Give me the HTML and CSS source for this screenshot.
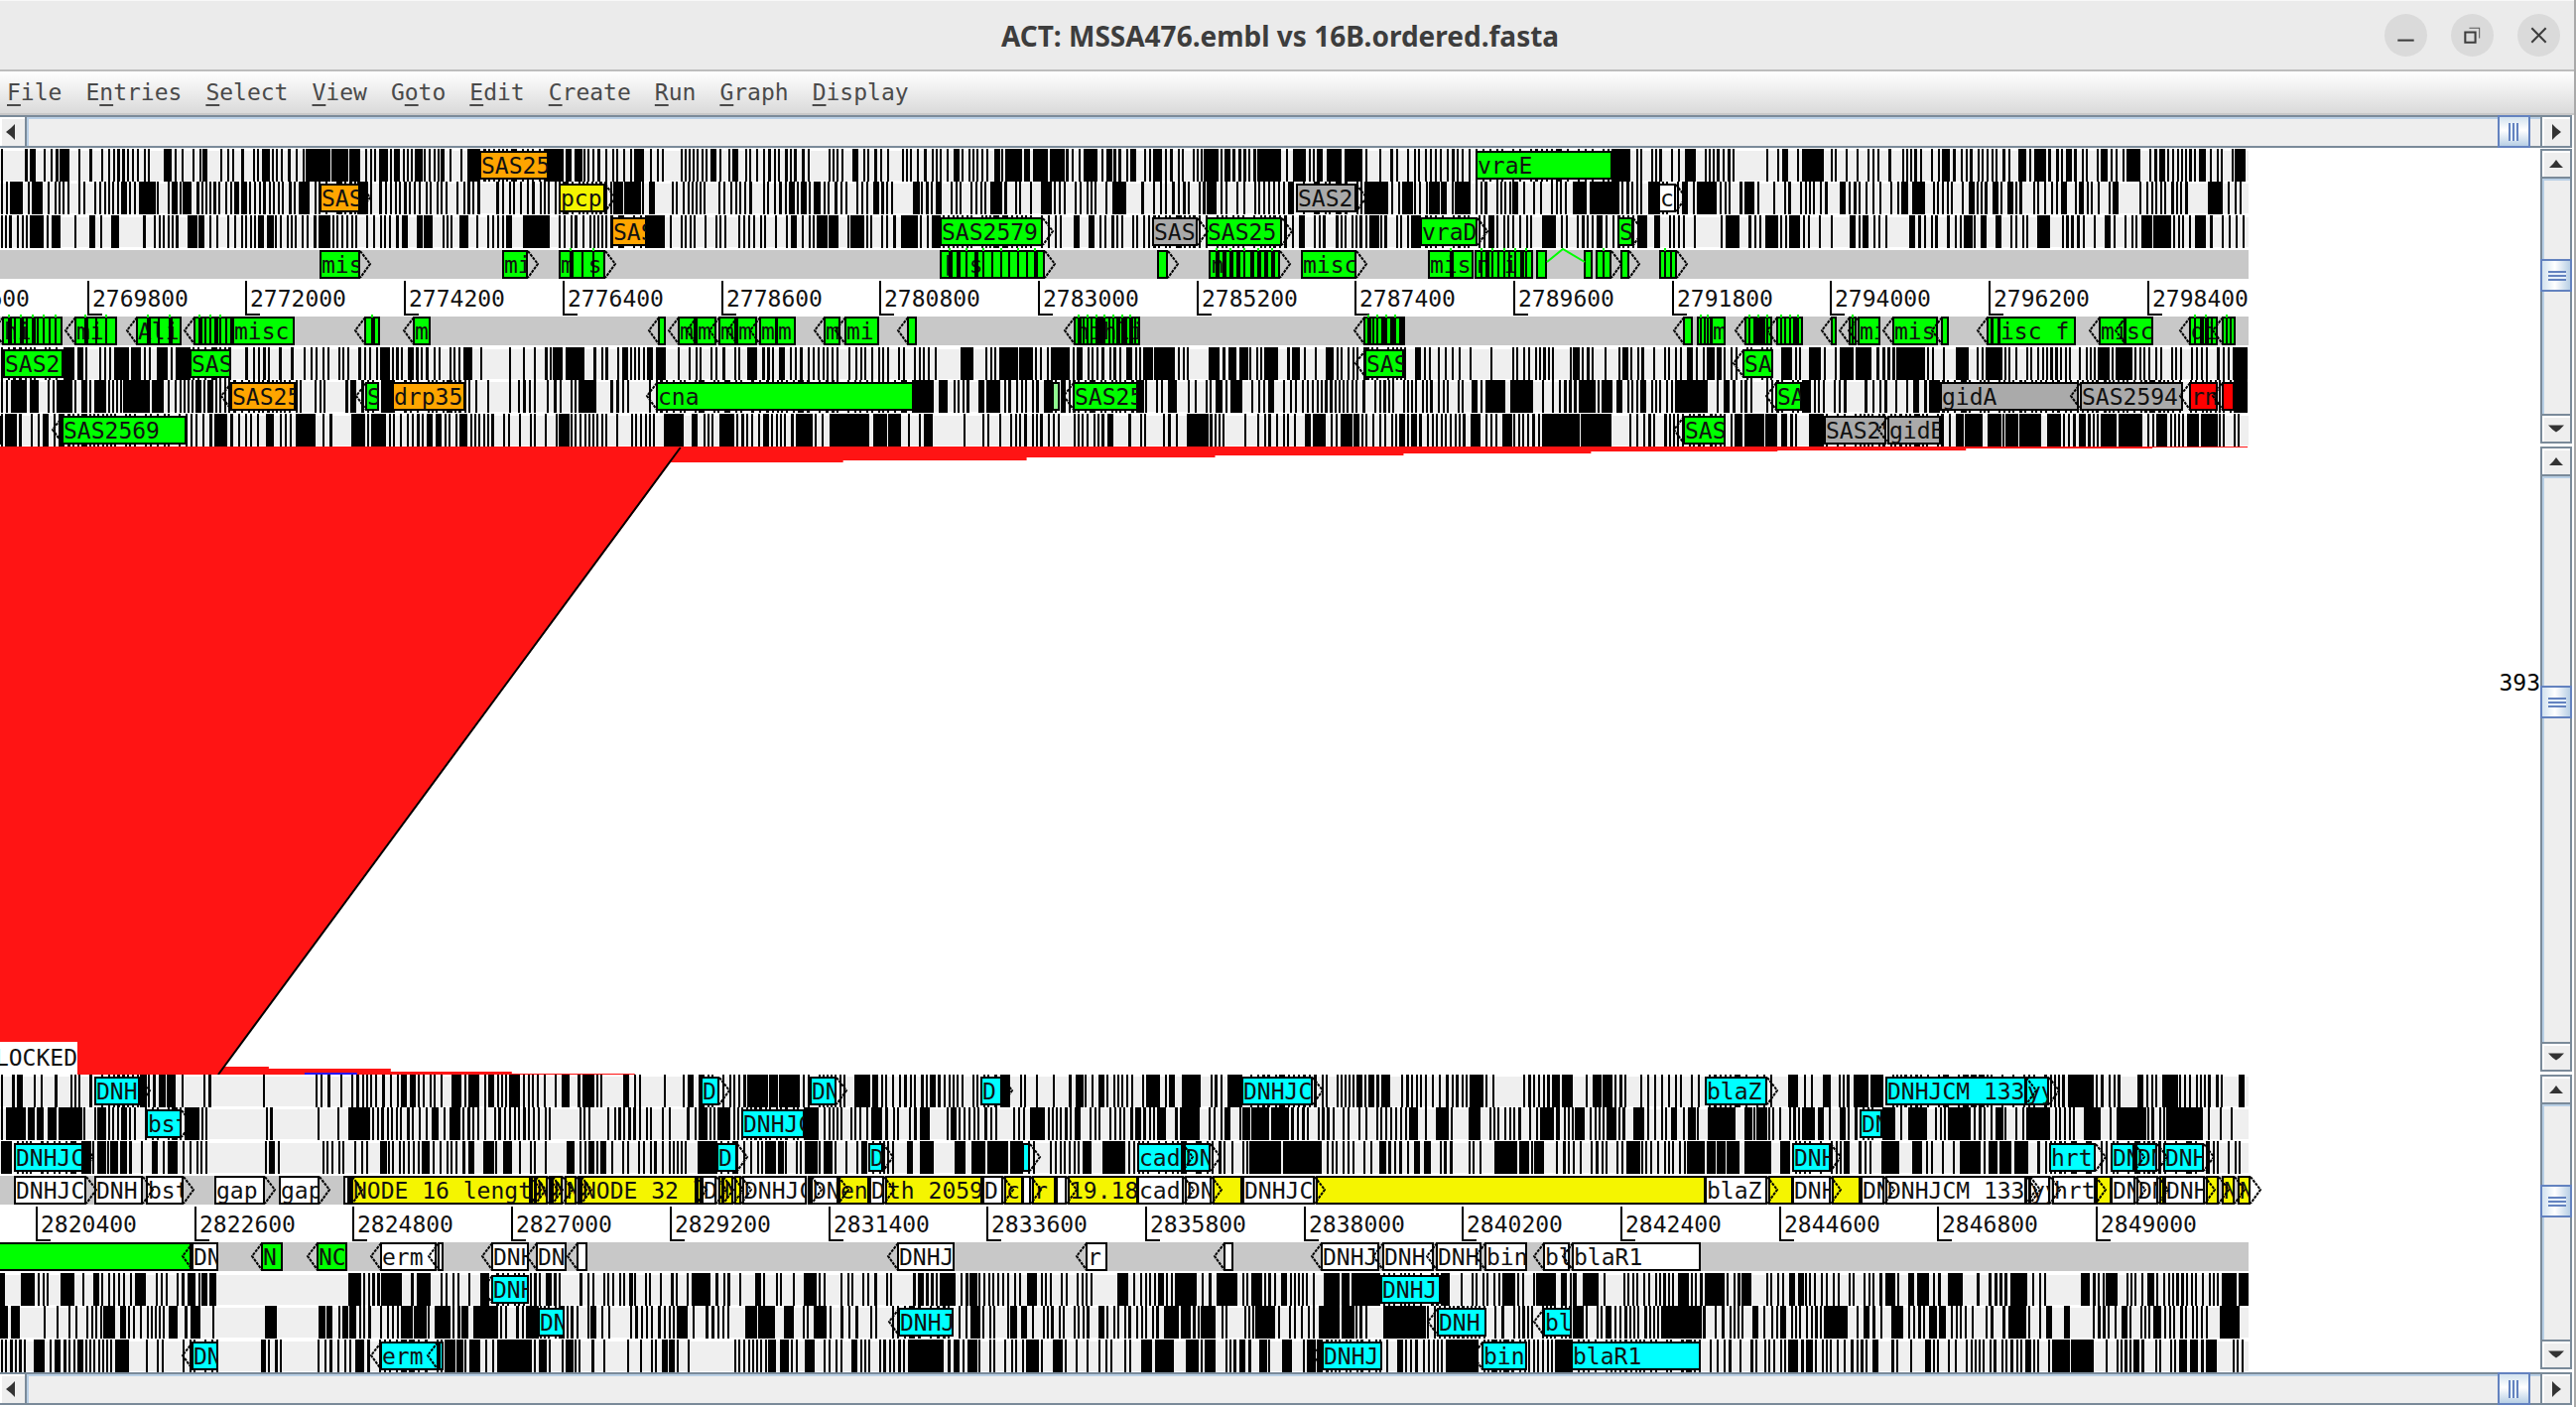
FILE: index.html
```
<!DOCTYPE html>
<html lang="en">
<head>
<meta charset="utf-8">
<title>ACT: MSSA476.embl vs 16B.ordered.fasta</title>
<link rel="stylesheet" href="styles.css">
</head>
<body>
<div class="window">
  <header class="titlebar">
    <h1 class="title">ACT: MSSA476.embl vs 16B.ordered.fasta</h1>
    <div class="window-buttons">
      <button class="round" aria-label="Minimize"><svg viewBox="0 0 42 42"><path d="M13 26h16" stroke-width="2"/></svg></button>
      <button class="round" aria-label="Restore"><svg viewBox="0 0 42 42"><path d="M14 18h10v10H14z" stroke-width="2"/><path d="M18 14h10v10" stroke-width="1" opacity=".8"/></svg></button>
      <button class="round" aria-label="Close"><svg viewBox="0 0 42 42"><path d="M14 14l14 14M28 14L14 28" stroke-width="2"/></svg></button>
    </div>
  </header>
  <nav class="menubar" aria-label="Main menu">
    <button><u>F</u>ile</button>
    <button>E<u>n</u>tries</button>
    <button><u>S</u>elect</button>
    <button><u>V</u>iew</button>
    <button>G<u>o</u>to</button>
    <button><u>E</u>dit</button>
    <button><u>C</u>reate</button>
    <button><u>R</u>un</button>
    <button><u>G</u>raph</button>
    <button><u>D</u>isplay</button>
  </nav>
  <div class="hscroll">
    <button class="arrow left" aria-label="Scroll left"><svg viewBox="0 0 9 16"><path d="M9 0v16L5 12 0 8l5-4z"/></svg></button>
    <div class="trough"><span class="before"></span><span class="thumb"></span></div>
    <button class="arrow right" aria-label="Scroll right"><svg viewBox="0 0 9 16"><path d="M0 0v16l4-4 5-4-5-4z"/></svg></button>
  </div>
  <main class="panels">
    <section class="panel sequence">
      <svg class="tracks" id="subject" role="img" aria-label="MSSA476.embl"></svg>
      <div class="vscroll">
        <button class="arrow" aria-label="Scroll up"><svg viewBox="0 0 14 8"><path d="M0 8h14L10 4 7 0 4 4z"/></svg></button>
        <div class="trough"><span class="before top"></span><span class="thumb"></span></div>
        <button class="arrow" aria-label="Scroll down"><svg viewBox="0 0 18 8"><path d="M0 0h18L13 5 9 8 5 5z"/></svg></button>
      </div>
    </section>
    <section class="panel comparison">
      <div class="matches">
        <svg class="match-map" viewBox="0 0 2561 632" preserveAspectRatio="none" role="img" aria-label="Matches">
          <path fill="#ff1414" d="M0 0H2266V1H2170V2H1982V4H1792V5H1604V7H1415V9H1225V11H1035V14H850V16H676L220 632H0z"/>
          <path fill="#ff1414" d="M224 624H271V626H394V629H516V631H640V632H220z"/>
          <path fill="#2814ff" d="M307 630h53v2h-53z"/>
          <path fill="none" stroke="#000" stroke-width="2" d="M686 1L220 632"/>
        </svg>
        <span class="lock">LOCKED</span>
        <span class="score">393</span>
      </div>
      <div class="vscroll">
        <button class="arrow" aria-label="Scroll up"><svg viewBox="0 0 14 8"><path d="M0 8h14L10 4 7 0 4 4z"/></svg></button>
        <div class="trough"><span class="before middle"></span><span class="thumb"></span></div>
        <button class="arrow" aria-label="Scroll down"><svg viewBox="0 0 18 8"><path d="M0 0h18L13 5 9 8 5 5z"/></svg></button>
      </div>
    </section>
    <section class="panel sequence">
      <svg class="tracks" id="query" role="img" aria-label="16B.ordered.fasta"></svg>
      <div class="vscroll">
        <button class="arrow" aria-label="Scroll up"><svg viewBox="0 0 14 8"><path d="M0 8h14L10 4 7 0 4 4z"/></svg></button>
        <div class="trough"><span class="before top"></span><span class="thumb"></span></div>
        <button class="arrow" aria-label="Scroll down"><svg viewBox="0 0 18 8"><path d="M0 0h18L13 5 9 8 5 5z"/></svg></button>
      </div>
    </section>
  </main>
  <div class="hscroll">
    <button class="arrow left" aria-label="Scroll left"><svg viewBox="0 0 9 16"><path d="M9 0v16L5 12 0 8l5-4z"/></svg></button>
    <div class="trough"><span class="before"></span><span class="thumb"></span></div>
    <button class="arrow right" aria-label="Scroll right"><svg viewBox="0 0 9 16"><path d="M0 0v16l4-4 5-4-5-4z"/></svg></button>
  </div>
</div>
<script src="tracks.js"></script>
</body>
</html>
```
FILE: styles.css
```
* { box-sizing: border-box; }
body {
  margin: 0;
  background: #a9a9a9;
  font-family: "DejaVu Sans Mono", monospace;
  font-size: 23px;
}
button { border: 0; padding: 0; background: none; font: inherit; color: inherit; }
.window {
  display: flex;
  flex-direction: column;
  min-height: 100vh;
  margin-right: 2px;
  padding-bottom: 2px;
  background: #fff;
}
.titlebar {
  display: grid;
  grid-template-columns: 1fr auto 1fr;
  align-items: center;
  height: 72px;
  padding-right: 14px;
  background: #ebebeb;
  border-top: 1px solid #f8f8f8;
  border-bottom: 2px solid #bdbdbd;
}
.title {
  grid-column: 2;
  margin: 0;
  font: bold 28px/36px "Noto Sans", sans-serif;
  color: #3d3d3d;
}
.window-buttons { display: flex; justify-content: flex-end; gap: 24px; }
.round { width: 43px; height: 43px; border-radius: 50%; background: #dadada; }
.round svg { display: block; width: 43px; height: 43px; fill: none; stroke: #3d3d3d; }
.menubar {
  display: flex;
  gap: 24px;
  height: 44px;
  padding: 0 7px;
  background: linear-gradient(#fff, #dadada);
  border-bottom: 2px solid #c8c8c8;
  color: #4a4a4a;
}
.menubar u { text-underline-offset: 4px; text-decoration-thickness: 2px; }
.hscroll {
  display: flex;
  height: 33px;
  border: solid #7a8a99;
  border-width: 2px 2px 2px 0;
  background: #eee;
  box-shadow: inset 0 2px #b8cfe5;
  margin-right: 2px;
}
.arrow { display: flex; align-items: center; justify-content: center; flex: none; background: #eee; }
.arrow svg { fill: #333; }
.hscroll .arrow { width: 30px; border-left: 2px solid #7a8a99; box-shadow: inset 2px 2px #fff; }
.hscroll .arrow.left { width: 27px; padding-right: 5px; border-left: 0; border-right: 2px solid #7a8a99; }
.hscroll .arrow svg { width: 9px; height: 16px; }
.trough { display: flex; flex: 1; }
.hscroll .trough { box-shadow: inset 2px 2px #b8cfe5; }
.hscroll .before { flex: 1; }
.thumb { flex: none; border: 2px solid #6382bf; }
.hscroll .thumb {
  width: 33px;
  margin: -2px 10px -2px 0;
  background:
    repeating-linear-gradient(90deg, #6382bf 0 2px, #e6f0fa 2px 4px) 9px 6px / 10px 18px no-repeat,
    linear-gradient(#d2e2ef, #fff 45%, #b8cfe5);
}
.panels { display: flex; flex-direction: column; flex: 1; padding-top: 1px; }
.panel { display: flex; background: #fff; }
.sequence { height: 300px; }
.comparison { flex: 1; min-height: 200px; }
.tracks { flex: 1; min-width: 0; height: 300px; }
.tracks text { font: 23px "DejaVu Sans Mono", monospace; fill: #111; }
.matches { position: relative; flex: 1; min-width: 0; }
.match-map { position: absolute; inset: 0; width: 100%; height: 100%; }
.lock {
  position: absolute;
  left: 0;
  bottom: 0;
  width: 78px;
  height: 33px;
  direction: rtl;
  overflow: hidden;
  background: #fff;
  line-height: 33px;
  color: #111;
}
.score { position: absolute; right: 0; top: 35%; line-height: 32px; }
.vscroll {
  display: flex;
  flex-direction: column;
  flex: none;
  width: 32px;
  margin: 0 2px 3px 0;
  border: 2px solid #7a8a99;
  background: #eee;
}
.vscroll .arrow { height: 28px; border: 0 solid #7a8a99; box-shadow: inset 2px 2px #fff; }
.vscroll .arrow:first-child { border-bottom-width: 2px; }
.vscroll .arrow:last-child { border-top-width: 2px; }
.vscroll .arrow svg { width: 16px; height: 8px; }
.vscroll .trough { flex-direction: column; box-shadow: inset 2px 2px #b8cfe5; }
.vscroll .before.top { flex: 0 0 34%; }
.vscroll .before.middle { flex: 0 0 37%; }
.vscroll .thumb {
  height: 33px;
  margin: 0 -2px;
  background:
    repeating-linear-gradient(#6382bf 0 2px, #e6f0fa 2px 4px) 6px 10px / 18px 10px no-repeat,
    linear-gradient(90deg, #d2e2ef, #fff 45%, #b8cfe5);
}
```
FILE: tracks.js
```
const NS = 'http://www.w3.org/2000/svg';
const WIDTH = 2266;
const ROW_TOP = [0, 33, 67, 100, 133, 167, 200, 233, 267];
const COLORS = { o: '#ffa500', g: '#00ff00', y: '#f5f500', a: '#aaaaaa', w: '#ffffff', c: '#00ffff', r: '#ff0000', p: '#90f890' };

// Stop codon density per frame row: [row, solid runs, open runs]
const subjectStops = [
  [0, '60-70 166-171 204-208 265-270 308-321 323-333 334-350 352-360 386-391 420-426 444-448 474-484 553-567 571-576 579-587 640-649 861-864 1002-1008 1013-1030 1041-1056 1061-1073 1093-1106 1115-1121 1162-1170 1213-1223 1267-1291 1306-1314 1337-1352 1355-1371 1624-1643 1698-1708 1820-1832 1957-1964 2034-2040 2050-2061 2118-2123 2143-2154 2218-2223 2252-2260', '7-25 36-44 71-79 153-165 210-222 235-243 675-686 730-734 742-751 818-835 897-909 1147-1153 1377-1390 1394-1401 1752-1780 1835-1845 1909-1917'],
  [1, '14-22 35-43 140-157 184-191 236-241 301-311 360-371 618-626 629-646 821-826 922-927 998-1008 1052-1058 1122-1133 1128-1135 1216-1226 1377-1398 1415-1424 1440-1451 1466-1480 1524-1530 1585-1594 1602-1631 1663-1672 1716-1730 1758-1768 1916-1923 1928-1937 2096-2100 2225-2240', '374-382 450-460 485-500 656-677 713-724 763-769 902-920 1013-1023 1135-1150 1537-1545 1654-1661 1776-1787 1843-1854 1938-1948 2040-2049 2080-2091 2130-2156 2204-2225'],
  [2, '30-41 52-60 112-120 191-199 270-276 321-333 427-436 463-472 528-552 656-669 824-834 836-845 857-866 910-925 939-948 1380-1390 1422-1432 1555-1568 1652-1660 1741-1749 1779-1792 1804-1814 1980-1988 2055-2065 2158-2169 2171-2186 2212-2223', '61-75 78-90 121-144 147-155 440-446 517-527 679-686 734-744 1069-1082 1336-1346 1401-1407 1545-1554 1661-1667 1716-1734 1835-1845 1848-1864 1902-1924 2065-2078 2261-2266'],
  [6, '64-75 117-130 132-142 158-166 177-192 384-393 467-476 557-567 573-584 661-671 753-761 970-981 1008-1025 1027-1040 1059-1078 1154-1162 1163-1181 1218-1229 1238-1246 1250-1258 1276-1286 1304-1310 1336-1344 1585-1592 1720-1728 1730-1735 1795-1806 1823-1833 1854-1867 1872-1886 1911-1940 1973-1984 2007-2016 2114-2126 2133-2148 2250-2265', '88-100 235-247 298-306 490-513 514-527 584-598 672-683 847-855 945-968 983-993 1198-1218 1441-1449 1483-1502 1506-1524 1571-1582 1605-1617 1621-1631 1789-1795 1965-1971 1986-1992 2087-2095'],
  [7, '13-27 32-38 57-73 95-107 124-151 155-165 384-396 584-600 921-939 948-955 994-1008 1052-1061 1069-1074 1146-1153 1177-1186 1225-1231 1242-1250 1499-1516 1522-1545 1593-1606 1616-1625 1690-1719 1817-1823 1944-1953 2253-2265', '306-317 331-348 484-491 494-513 515-522 539-551 567-575 600-615 633-654 1187-1197 1474-1483 1556-1564 1768-1780 1840-1848 1867-1879 1900-1910'],
  [8, '6-16 216-228 268-276 298-314 356-367 377-387 463-471 563-574 671-689 725-738 802-818 836-874 880-893 895-908 931-940 1198-1218 1323-1334 1352-1363 1482-1491 1514-1524 1554-1591 1593-1624 1749-1756 1758-1778 1780-1791 1825-1837 1971-1978 1980-1996 2003-2017 2021-2034 2040-2057 2063-2076 2095-2101 2118-2133 2135-2158 2174-2183 2204-2216 2218-2235', '23-31 314-325 344-354 627-636 703-709 940-971 973-990 1000-1007 1069-1082 1120-1137 1156-1172 1237-1254 1256-1267 1625-1642 1810-1823'],
];
const queryStops = [
  [0, '141-148 160-166 168-177 457-465 474-480 515-522 567-574 589-597 753-774 776-783 785-806 862-877 938-943 1010-1018 1084-1092 1155-1166 1191-1210 1237-1252 1392-1401 1487-1495 1564-1572 1574-1583 1606-1614 1617-1625 1802-1812 1839-1845 1868-1883 1885-1898 2086-2110 2155-2160 2179-2195 2258-2261', '21-34 46-55 63-71 188-205 215-265 272-318 333-343 347-354 607-628 648-669 671-688 696-704 853-861 973-980 1021-1028 1036-1044 1049-1061 1067-1077 1215-1220 1401-1412 1514-1535 1585-1598 1642-1653 1695-1701 1791-1802 1827-1837 1845-1853 2137-2154 2241-2256 2261-2266'],
  [1, '8-15 16-26 29-34 37-44 48-57 60-83 98-107 189-200 353-362 367-373 435-441 453-461 705-713 726-736 811-823 880-887 929-933 1044-1052 1166-1174 1191-1209 1234-1239 1252-1260 1265-1279 1281-1299 1420-1429 1453-1459 1482-1490 1552-1566 1568-1572 1587-1596 1621-1629 1646-1656 1684-1690 1701-1709 1722-1747 1758-1766 1770-1781 1816-1827 1898-1908 1924-1942 1965-1982 2011-2019 2042-2066 2101-2117 2134-2163 2183-2205 2210-2219', '210-268 274-320 326-340 342-351 490-498 577-584 560-583 598-612 661-667 677-692 851-857 908-916 935-954 1012-1021 1239-1246 1346-1353 1464-1480 1533-1541 1797-1803 1846-1854 1919-1923 2118-2126 2128-2133 2229-2237 2239-2248 2254-2264'],
  [2, '2-12 84-92 100-107 111-119 121-126 169-179 383-390 427-433 492-498 507-514 571-579 705-723 772-780 784-790 812-824 832-839 915-920 928-941 966-973 979-993 995-1016 1020-1031 1091-1100 1112-1129 1120-1130 1259-1291 1293-1332 1392-1397 1435-1441 1508-1529 1532-1541 1546-1556 1642-1653 1700-1718 1721-1729 1731-1739 1741-1753 1758-1783 1795-1804 1898-1914 1929-1937 1981-1996 2005-2011 2018-2026 2032-2042 2223-2227', '180-184 209-267 274-279 283-325 346-357 371-383 500-506 515-523 560-571 579-584 617-627 692-703 905-914 920-927 949-962 973-979 1052-1058 1101-1111 1236-1241 1382-1390 1441-1451 1466-1480 1495-1506 1558-1568 1752-1758 1784-1788 1887-1896 1915-1927 2261-2266'],
  [6, '0-5 23-34 63-75 138-147 189-197 203-209 212-218 352-358 384-405 420-434 486-493 634-638 700-712 813-823 925-931 947-962 977-985 1036-1045 1128-1136 1167-1173 1186-1195 1197-1206 1227-1242 1263-1272 1334-1350 1352-1360 1362-1391 1452-1459 1514-1523 1548-1568 1585-1589 1596-1610 1691-1700 1718-1728 1730-1737 1755-1764 1812-1818 1902-1910 1934-1944 1965-1978 2026-2038 2099-2106 2122-2132 2164-2171 2241-2253 2256-2266', '6-21 48-61 147-157 219-351 434-444 475-484 564-584 747-761 772-782 791-799 802-810 834-847 908-920 963-968 1029-1035 1105-1126 1461-1472 1590-1595 1627-1636 1765-1780 1955-1963 1980-1992 1996-2003 2066-2097 2214-2219'],
  [7, '0-8 11-20 104-115 170-179 193-202 268-279 323-328 352-358 404-414 417-430 440-452 465-472 477-502 530-543 595-601 682-690 751-761 764-779 790-799 824-832 980-988 1018-1025 1177-1188 1190-1198 1210-1219 1265-1283 1329-1350 1352-1365 1396-1415 1417-1437 1585-1594 1686-1713 1680-1687 1699-1715 1841-1862 1906-1918 1944-1952 1956-1961 2024-2042 2080-2086 2170-2177 2239-2257', '20-44 46-57 59-69 203-214 217-267 279-321 334-341 375-383 583-592 617-635 702-711 738-751 801-809 866-877 885-899 1003-1015 1221-1231 1242-1254 1378-1394 1499-1506 1718-1728 1778-1785 1898-1906 1992-2001 2066-2080 2088-2109 2226-2237'],
  [8, '34-40 116-130 264-268 358-367 450-459 461-467 474-482 502-528 530-535 543-551 572-578 667-672 674-680 774-782 786-794 813-820 916-951 977-985 1036-1046 1062-1071 1152-1161 1166-1182 1195-1208 1216-1225 1269-1277 1294-1301 1317-1325 1327-1333 1459-1488 1568-1584 1802-1812 1820-1827 1941-1946 2069-2084 2087-2108 2196-2204 2208-2214 2225-2233', '26-34 130-147 165-184 220-263 283-320 560-566 585-596 609-632 634-645 697-740 805-811 820-826 1006-1012 1052-1061 1096-1107 1122-1133 1145-1150 1183-1195 1229-1235 1252-1258 1281-1292 1306-1313 1743-1753 1755-1764 1772-1778 1896-1906 1915-1925 1927-1940 2109-2122 2164-2172 2235-2250'],
];

// Features: row start end colour direction label ("|n" draws n exon boundaries)
const subjectFeatures = `
0 484 553 o - SAS25
0 1488 1625 g - vraE
1 323 363 o > SAS
1 564 610 y > pcp
1 1307 1367 a > SAS2
1 1672 1689 w > c
2 617 652 o > SAS
2 948 1051 g > SAS2579
2 1162 1207 a > SAS
2 1216 1292 g > SAS25
2 1432 1489 g > vraD
2 1631 1646 g > S
3 323 363 g > mis
3 507 532 g > mi
3 564 610 g > m s|3
3 948 1053 g > [ s|11
3 1167 1177 g >
3 1219 1290 g > n|9
3 1312 1367 g > misc
3 1440 1485 g - mis|1
3 1487 1545 g - n i|9
3 1549 1559 g -
3 1597 1605 g -
3 1609 1624 g > |1
3 1634 1642 g >
3 1673 1690 g > |2
5 3 63 g < hi|9
5 76 118 g < mi|3
5 138 183 g < Ali|3
5 196 234 g < |6
5 235 297 g - misc
5 368 383 g < |1
5 417 434 g < m
5 664 671 g <
5 684 701 g < m
5 702 722 g < m
5 725 742 g < m
5 743 763 g < m
5 766 783 g < m
5 783 802 g - m
5 831 847 g < m
5 852 886 g < mi
5 915 924 g <
5 1083 1149 g < nihli|14
5 1375 1416 g < |8
5 1697 1706 g <
5 1711 1725 g - |3
5 1725 1739 g - m
5 1759 1786 g < |5
5 1791 1817 g < |5
5 1846 1851 g <
5 1864 1871 g < |1
5 1873 1895 g < mi
5 1908 1953 g < mis
5 1957 1964 g <
5 2003 2008 g <
5 2008 2015 g -
5 2015 2092 g - isc f
5 2116 2142 g < mi
5 2142 2170 g < sc
5 2207 2235 g < di|4
5 2240 2253 g < |2
6 4 64 g - SAS2
6 192 233 g - SAS
6 1376 1415 g < SAS
6 1757 1787 g < SA
7 233 298 o < SAS25
7 369 382 g < S
7 396 469 o - drp35
7 662 921 g < cna
7 1061 1068 p -
7 1082 1147 g < SAS25
7 1790 1816 g < SA
7 1956 2095 a < gidA
7 2097 2200 a < SAS2594
7 2207 2235 r < rn
7 2240 2252 r <
8 0 2 p -
8 63 188 g < SAS2569
8 1697 1739 g < SAS
8 1839 1901 a < SAS25
8 1903 1956 a < gidB`;
const queryFeatures = `
0 96 141 c > DNH
0 707 725 c > D
0 817 843 c > DN
0 989 1010 c > D
0 1252 1323 c > DNHJC
0 1719 1781 c > blaZ
0 1901 2042 c > DNHJCM_133
0 2042 2065 c > yy
1 148 183 c > bst
1 748 811 c - DNHJC
1 1875 1897 c > DN
2 15 84 c > DNHJC
2 723 743 c > D
2 876 890 c > D
2 1031 1038 c >
2 1147 1192 c > cad
2 1194 1220 c > DN
2 1807 1845 c > DNH
2 2066 2112 c > hrt
2 2128 2151 c > DN
2 2153 2174 c > DN
2 2181 2221 c > DNH
3 15 87 w > DNHJC
3 96 144 w > DNH
3 148 185 w > bst
3 217 267 w > gap
3 282 322 w > gap
3 347 352 w -
3 352 355 y >
3 355 535 y > NODE_16_lengt
3 536 540 y >
3 540 552 y > N
3 554 557 y >
3 557 567 y > N
3 570 581 y > N
3 583 586 y >
3 586 702 y > NODE_32_l
3 703 707 y -
3 708 722 w > D
3 725 729 y >
3 729 739 y > N
3 741 747 y >
3 749 813 w - DNHJC
3 815 818 y >
3 818 845 w > DN
3 846 876 y - en
3 877 891 w > D
3 893 990 y - th_2059
3 991 1011 w > D
3 1013 1031 y - c
3 1031 1039 w >
3 1041 1064 y - r
3 1065 1075 w >
3 1077 1147 y - 19.18
3 1147 1193 w > cad
3 1195 1221 w > DN
3 1223 1252 y -
3 1253 1325 w > DNHJC
3 1327 1719 y -
3 1719 1781 w > blaZ
3 1783 1807 y -
3 1807 1845 w > DNH
3 1847 1875 y -
3 1876 1899 w > DN
3 1901 2042 w > DNHJCM_133
3 2042 2046 w >
3 2046 2066 w > yy
3 2069 2112 w > hrt
3 2113 2128 y -
3 2128 2152 w > DN
3 2154 2175 w > DN
3 2177 2181 y -
3 2182 2222 w > DNH
3 2224 2236 y >
3 2240 2252 y > N
3 2256 2268 y > N
5 -4 193 g -
5 194 220 w < DN
5 264 285 g < N
5 320 350 g < NC
5 384 440 w < erm
5 442 447 w <
5 496 533 w < DNH
5 541 571 w < DN
5 582 592 w <
5 905 962 w < DNHJ
5 1095 1116 w < r
5 1234 1243 w <
5 1332 1390 w < DNHJ
5 1394 1445 w < DNH
5 1448 1493 w < DNH
5 1497 1539 w < bin
5 1556 1582 w < bl
5 1585 1714 w < blaR1
6 496 533 c < DNH
6 1392 1452 c < DNHJ
7 543 569 c - DN
7 906 961 c < DNHJ
7 1449 1498 c < DNH
7 1556 1584 c < bl
8 194 220 c < DN
8 384 447 c < erm
8 441 443 c <
8 1333 1393 c < DNHJ
8 1494 1539 c < bin
8 1584 1714 c - blaR1`;

function add(parent, name, attrs, content) {
  const node = document.createElementNS(NS, name);
  for (const key in attrs) node.setAttribute(key, attrs[key]);
  if (content) node.textContent = content;
  parent.appendChild(node);
  return node;
}

function generator(seed) {
  let state = seed;
  return () => (state = (state * 16807) % 2147483647) / 2147483647;
}

const ranges = text => text.split(' ').map(part => part.split('-').map(Number));

function drawStops(svg, [row, solid, open]) {
  const top = ROW_TOP[row];
  const random = generator(7919 * (row + 3));
  const solids = ranges(solid);
  const opens = ranges(open);
  add(svg, 'rect', { x: 0, y: top + 2, width: WIDTH, height: 30, fill: '#efefef' });
  let bars = '';
  let x = 1;
  while (x < WIDTH - 4) {
    const gap = opens.find(([a, b]) => x >= a && x < b);
    if (gap) { x = gap[1]; continue; }
    const roll = random();
    const width = roll < 0.78 ? 2 : roll < 0.92 ? 3 : 6;
    bars += `M${x} ${top}h${width}v33h-${width}z`;
    const space = random();
    x += width + (space < 0.35 ? 2 : space < 0.65 ? 3 : space < 0.87 ? 5 : 9);
  }
  for (const [a, b] of solids) bars += `M${a} ${top}H${b}v33H${a}z`;
  add(svg, 'path', { d: bars, fill: '#000' });
}

function parse(line) {
  const [, row, start, end, color, dir, label] = line.match(/^(\d) (-?\d+) (\d+) (\w) ([<>-]) ?(.*)$/);
  return { top: ROW_TOP[row] + 3, start: Number(start), end: Number(end), color, dir, label };
}

function drawFeature(svg, { top, start, end, color, label }) {
  const width = Math.max(2, end - start - 1);
  const [text, stripes] = label.split('|');
  add(svg, 'rect', { x: start, y: top, width, height: 27, fill: COLORS[color], stroke: '#000', 'stroke-width': 2 });
  if (text) {
    const clip = add(svg, 'svg', { x: start, y: top, width, height: 27 });
    add(clip, 'text', { x: 1, y: 22 }, text.trim());
  }
  if (stripes) {
    const random = generator(start * 31 + 5);
    const step = width / (Number(stripes) + 1);
    let lines = '';
    let ticks = '';
    for (let i = 1; i <= stripes; i++) {
      const at = Math.round(start + i * step);
      const w = random() < 0.35 ? 4 : 2;
      lines += `M${at - 1} ${top}h${w}v27h-${w}z`;
      if (i % 2) ticks += `M${at} ${top - 3}v3`;
    }
    add(svg, 'path', { d: lines, fill: '#000' });
    add(svg, 'path', { d: ticks, stroke: '#00ff00', 'stroke-width': 2 });
  }
}

function drawArrow(svg, { top, start, end, dir }) {
  if (dir === '-') return;
  const base = dir === '>' ? end : start;
  const tip = dir === '>' ? base + 10 : base - 10;
  add(svg, 'path', { d: `M${base} ${top}L${tip} ${top + 13}L${base} ${top + 27}`, fill: 'none', stroke: '#000', 'stroke-width': 2, 'stroke-dasharray': '3 1' });
}

function draw(id, stops, features, firstTick, firstLabel) {
  const svg = document.getElementById(id);
  stops.forEach(entry => drawStops(svg, entry));
  for (const y of [102, 169]) add(svg, 'rect', { x: 0, y, width: WIDTH, height: 29, fill: '#c8c8c8' });
  for (let i = 0; ; i++) {
    const x = Math.round(firstTick + i * 159.7);
    if (x > WIDTH - 100) break;
    add(svg, 'path', { d: `M${x} 133V167H${x + 14}`, fill: 'none', stroke: '#000', 'stroke-width': 2 });
    add(svg, 'text', { x: x + 4, y: 159 }, String(firstLabel + i * 2200));
  }
  const parsed = features.trim().split('\n').map(parse);
  parsed.forEach(feature => drawFeature(svg, feature));
  parsed.forEach(feature => drawArrow(svg, feature));
  return svg;
}

const subject = draw('subject', subjectStops, subjectFeatures, -71, 2767600);
add(subject, 'path', { d: 'M1559 114L1575 101L1597 114', fill: 'none', stroke: '#00ff00', 'stroke-width': 2 });
draw('query', queryStops, queryFeatures, 37, 2820400);
```
